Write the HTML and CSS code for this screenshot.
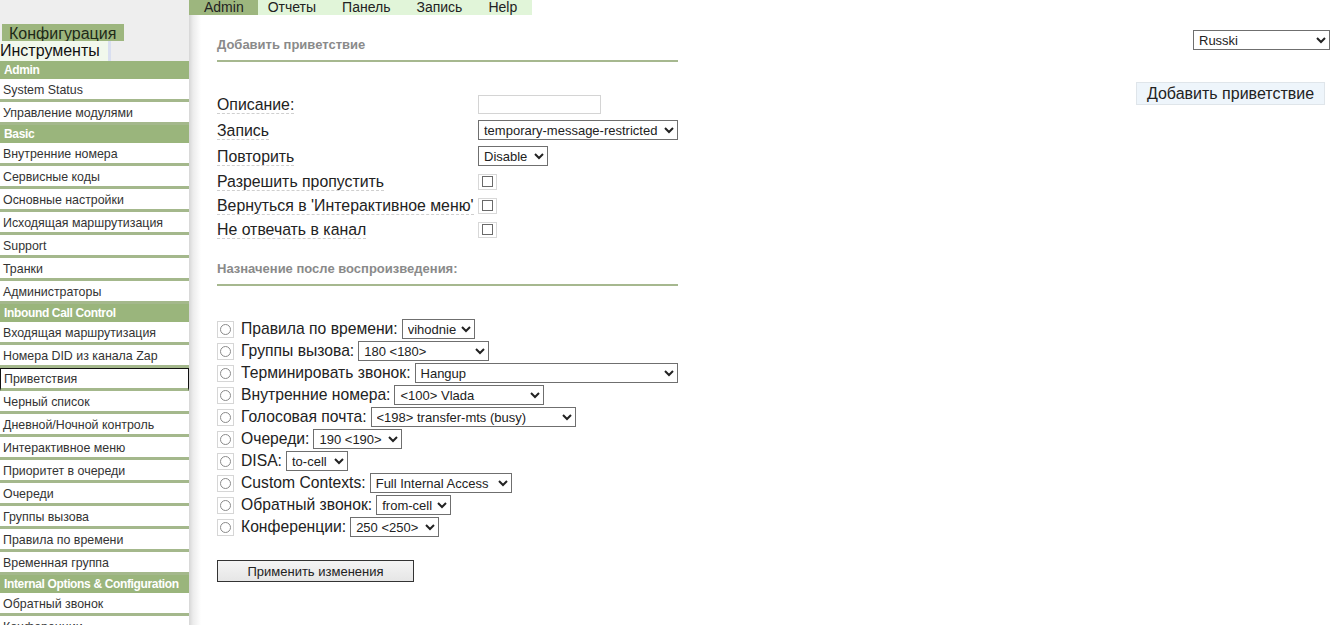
FILE: index.html
```html
<!DOCTYPE html>
<html lang="ru">
<head>
<meta charset="utf-8">
<title>Приветствия</title>
<link rel="stylesheet" href="styles.css">
</head>
<body>
<div class="page">
  <aside class="sidebar">
    <div class="side-tabs">
      <div class="tab-config">Конфигурация</div>
      <div class="tab-tools">Инструменты</div>
    </div>
    <ul class="menu">
      <li class="menu-head">Admin</li>
      <li class="menu-item">System Status</li>
      <li class="menu-item">Управление модулями</li>
      <li class="menu-head">Basic</li>
      <li class="menu-item">Внутренние номера</li>
      <li class="menu-item">Сервисные коды</li>
      <li class="menu-item">Основные настройки</li>
      <li class="menu-item">Исходящая маршрутизация</li>
      <li class="menu-item">Support</li>
      <li class="menu-item">Транки</li>
      <li class="menu-item">Администраторы</li>
      <li class="menu-head">Inbound Call Control</li>
      <li class="menu-item">Входящая маршрутизация</li>
      <li class="menu-item">Номера DID из канала Zap</li>
      <li class="menu-item current">Приветствия</li>
      <li class="menu-item">Черный список</li>
      <li class="menu-item">Дневной/Ночной контроль</li>
      <li class="menu-item">Интерактивное меню</li>
      <li class="menu-item">Приоритет в очереди</li>
      <li class="menu-item">Очереди</li>
      <li class="menu-item">Группы вызова</li>
      <li class="menu-item">Правила по времени</li>
      <li class="menu-item">Временная группа</li>
      <li class="menu-head">Internal Options &amp; Configuration</li>
      <li class="menu-item">Обратный звонок</li>
      <li class="menu-item">Конференции</li>
    </ul>
  </aside>
  <main class="main">
    <nav class="topnav">
      <span class="nav-item active">Admin</span>
      <span class="nav-item second">Отчеты</span>
      <span class="nav-item">Панель</span>
      <span class="nav-item">Запись</span>
      <span class="nav-item last">Help</span>
    </nav>
    <div class="content">
      <div class="form-col">
        <h2 class="section-title">Добавить приветствие</h2>
        <table class="form-table">
          <tr class="row-tall">
            <td class="lbl"><span class="tip">Описание:</span></td>
            <td><input class="text-in" type="text"></td>
          </tr>
          <tr class="row-tall">
            <td class="lbl"><span class="tip">Запись</span></td>
            <td><select class="sel w-rec"><option>temporary-message-restricted</option></select></td>
          </tr>
          <tr class="row-tall">
            <td class="lbl"><span class="tip">Повторить</span></td>
            <td><select class="sel w-dis"><option>Disable</option></select></td>
          </tr>
          <tr class="row-short">
            <td class="lbl"><span class="tip">Разрешить пропустить</span></td>
            <td><span class="cbox"><input type="checkbox" class="chk"></span></td>
          </tr>
          <tr class="row-short">
            <td class="lbl"><span class="tip">Вернуться в 'Интерактивное меню'</span></td>
            <td><span class="cbox"><input type="checkbox" class="chk"></span></td>
          </tr>
          <tr class="row-short">
            <td class="lbl"><span class="tip">Не отвечать в канал</span></td>
            <td><span class="cbox"><input type="checkbox" class="chk"></span></td>
          </tr>
        </table>
        <h2 class="section-title second-title">Назначение после воспроизведения:</h2>
        <div class="dest-list">
          <div class="dest"><span class="rbox"><input type="radio" name="d" class="rad"></span><span class="dest-lbl">Правила по времени:</span><select class="sel" style="width:73px"><option>vihodnie</option></select></div>
          <div class="dest"><span class="rbox"><input type="radio" name="d" class="rad"></span><span class="dest-lbl">Группы вызова:</span><select class="sel" style="width:131px"><option>180 &lt;180&gt;</option></select></div>
          <div class="dest"><span class="rbox"><input type="radio" name="d" class="rad"></span><span class="dest-lbl">Терминировать звонок:</span><select class="sel" style="width:291px"><option>Hangup</option></select></div>
          <div class="dest"><span class="rbox"><input type="radio" name="d" class="rad"></span><span class="dest-lbl">Внутренние номера:</span><select class="sel" style="width:150px"><option>&lt;100&gt; Vlada</option></select></div>
          <div class="dest"><span class="rbox"><input type="radio" name="d" class="rad"></span><span class="dest-lbl">Голосовая почта:</span><select class="sel" style="width:205px"><option>&lt;198&gt; transfer-mts (busy)</option></select></div>
          <div class="dest"><span class="rbox"><input type="radio" name="d" class="rad"></span><span class="dest-lbl">Очереди:</span><select class="sel" style="width:89px"><option>190 &lt;190&gt;</option></select></div>
          <div class="dest"><span class="rbox"><input type="radio" name="d" class="rad"></span><span class="dest-lbl">DISA:</span><select class="sel" style="width:62px"><option>to-cell</option></select></div>
          <div class="dest"><span class="rbox"><input type="radio" name="d" class="rad"></span><span class="dest-lbl">Custom Contexts:</span><select class="sel" style="width:142px"><option>Full Internal Access</option></select></div>
          <div class="dest"><span class="rbox"><input type="radio" name="d" class="rad"></span><span class="dest-lbl">Обратный звонок:</span><select class="sel" style="width:75px"><option>from-cell</option></select></div>
          <div class="dest"><span class="rbox"><input type="radio" name="d" class="rad"></span><span class="dest-lbl">Конференции:</span><select class="sel" style="width:89px"><option>250 &lt;250&gt;</option></select></div>
        </div>
        <button class="apply" type="button">Применить изменения</button>
      </div>
      <div class="right-col">
        <select class="sel lang"><option>Russki</option></select>
        <button class="add-btn" type="button">Добавить приветствие</button>
      </div>
    </div>
  </main>
</div>
</body>
</html>
```
FILE: styles.css
```css
* { box-sizing: border-box; }
html, body { margin: 0; padding: 0; background: #fff; }
body { font-family: "Liberation Sans", Arial, sans-serif; color: #222; }

.page {
  display: flex;
  height: 625px;
  overflow: hidden;
}

/* Sidebar */
.sidebar {
  width: 189px;
  flex-shrink: 0;
  background: #eeeeee;
}
.side-tabs {
  height: 61px;
  padding-top: 24px;
}
.tab-config {
  width: 122px;
  height: 17px;
  margin-left: 2px;
  padding-left: 7px;
  background: #9db67e;
  font-size: 16px;
  line-height: 20px;
  color: #1e2a18;
  overflow: hidden;
}
.tab-tools {
  width: 111px;
  height: 20px;
  background: #f1f8ec;
  border-right: 3px solid #d9dff0;
  font-size: 16px;
  line-height: 20px;
  color: #111;
}
.menu {
  list-style: none;
  margin: 0;
  padding: 0;
}
.menu-head {
  height: 18px;
  background: #9ab57c;
  color: #fff;
  font-weight: bold;
  font-size: 12px;
  line-height: 16px;
  padding-top: 1px;
  padding-left: 4px;
  white-space: nowrap;
  overflow: hidden;
  letter-spacing: -0.35px;
}
.menu-item {
  height: 23px;
  background: #fff;
  border-bottom: 3px solid #a4b88c;
  font-size: 12.4px;
  line-height: 22px;
  color: #333;
  padding-left: 3px;
  white-space: nowrap;
  overflow: hidden;
}
.menu-item.current {
  border: 1px solid #111;
  border-bottom: 3px solid #a4b88c;
  line-height: 20px;
  padding-left: 3px;
}

/* Main */
.main {
  flex: 1;
  background: linear-gradient(to right, #d6d6d6 0, #ececec 4px, #fff 12px);
}
.topnav {
  display: flex;
  width: max-content;
  height: 15px;
  background: #e1f5d9;
  font-size: 14px;
  line-height: 15px;
  color: #222;
}
.nav-item { padding: 0 13px; }
.nav-item.active {
  background: #9db67e;
  padding: 0 14px 0 15px;
}
.nav-item.second { padding-left: 10px; }
.nav-item.last { padding-right: 15px; }

.content {
  display: flex;
  padding-left: 28px;
}
.form-col {
  width: 461px;
  flex-shrink: 0;
}
.section-title {
  margin: 22px 0 0;
  padding-bottom: 7px;
  border-bottom: 2px solid #a6b88f;
  font-size: 13px;
  line-height: 16px;
  font-weight: bold;
  color: #8a8a8a;
}
.second-title { margin-top: 20px; }

.form-table {
  border-collapse: collapse;
  margin-top: 29px;
}
.form-table td { padding: 0; vertical-align: middle; }
.row-tall { height: 26px; }
.row-short { height: 24px; }
.lbl { width: 261px; font-size: 15.85px; }
.tip {
  border-bottom: 1px dashed #cfcfcf;
  line-height: 19px;
  white-space: nowrap;
}

.text-in {
  width: 123px;
  height: 19px;
  border: 1px solid #d4d4d4;
  margin: 0;
  padding: 0 2px;
  font-size: 12px;
}
.sel {
  height: 20px;
  border: 1px solid #6f6f6f;
  border-radius: 0;
  background: #fff;
  font-family: "Liberation Sans", Arial, sans-serif;
  font-size: 13px;
  color: #222;
  margin: 0;
  padding: 0 0 0 1px;
}
.w-rec { width: 200px; }
.w-dis { width: 70px; }

.cbox {
  display: inline-flex;
  width: 19px;
  height: 16px;
  border: 1px solid #d8d8d8;
  align-items: center;
  justify-content: center;
  vertical-align: middle;
}
.chk {
  appearance: none;
  -webkit-appearance: none;
  width: 11px;
  height: 11px;
  border: 1px solid #6a6a6a;
  margin: 0;
  background: #fff;
}

.dest-list { margin-top: 32px; }
.dest {
  display: flex;
  align-items: center;
  height: 22px;
  font-size: 15.7px;
  white-space: nowrap;
}
.rbox {
  display: inline-flex;
  width: 17px;
  height: 17px;
  border: 1px solid #d6d6d6;
  align-items: center;
  justify-content: center;
  flex-shrink: 0;
}
.rad {
  appearance: none;
  -webkit-appearance: none;
  width: 11px;
  height: 11px;
  border: 1px solid #8a8a8a;
  border-radius: 50%;
  margin: 0;
  background: #fff;
}
.dest-lbl { margin-left: 7px; margin-right: 4px; }

.apply {
  display: block;
  margin-top: 22px;
  width: 197px;
  height: 22px;
  border: 1px solid #333;
  border-radius: 0;
  background: linear-gradient(#f4f4f4, #e6e6e6);
  font-family: "Liberation Sans", Arial, sans-serif;
  font-size: 13px;
  color: #222;
  padding: 0;
}

.right-col {
  margin-left: auto;
  display: flex;
  flex-direction: column;
  align-items: flex-end;
  padding-top: 15px;
}
.lang {
  width: 137px;
  margin-right: 5px;
}
.add-btn {
  margin-top: 32px;
  margin-right: 10px;
  width: 189px;
  height: 23px;
  border: 1px solid #dfe5ea;
  border-radius: 0;
  background: #eef5fb;
  font-family: "Liberation Sans", Arial, sans-serif;
  font-size: 16px;
  color: #222;
  padding: 0;
}
```
